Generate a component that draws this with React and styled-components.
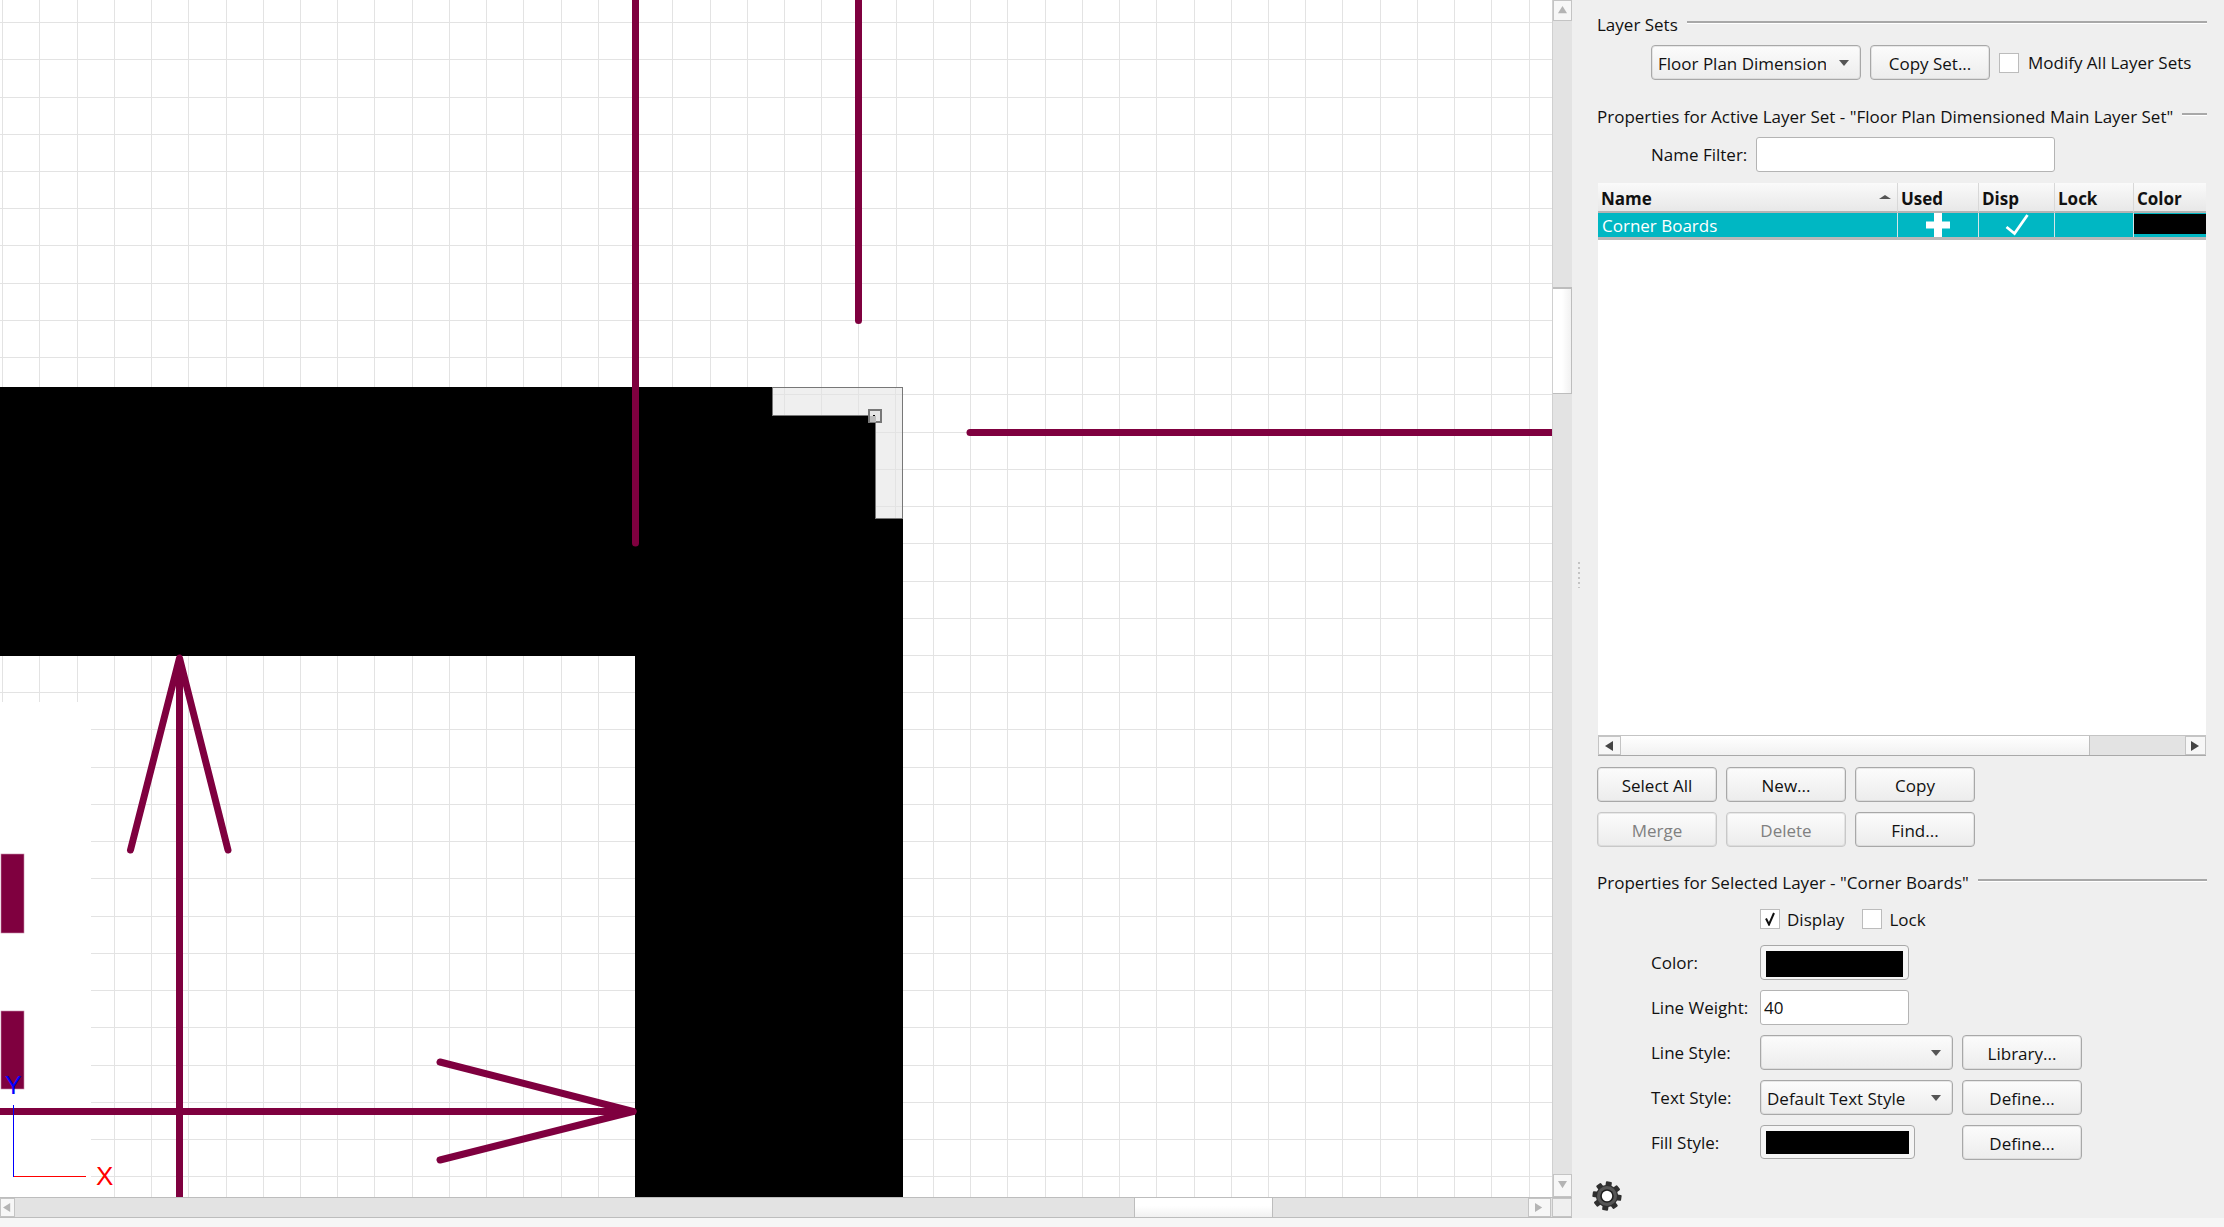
import React from "react";
import styled, { createGlobalStyle } from "styled-components";

const Global = createGlobalStyle`
  html, body { margin: 0; padding: 0; background: #f5f5f5; overflow: hidden; }
  body { font-family: "Open Sans", "Noto Sans", sans-serif; font-size: 17px; color: #111; }
`;

const MAROON = "#7f003f";
const PITCH = 37.23;
const CANVAS_W = 1552;
const CANVAS_H = 1197;

const Page = styled.div`
  width: 2224px;
  height: 1227px;
  display: flex;
  flex-direction: column;
  overflow: hidden;
`;
const Main = styled.div`
  height: 1218px;
  display: flex;
`;
const CanvasColumn = styled.div`
  width: 1572px;
  display: flex;
  flex-direction: column;
  flex: none;
`;
const CanvasRow = styled.div`
  height: 1197px;
  display: flex;
`;
const Drawing = styled.svg`
  display: block;
  width: ${CANVAS_W}px;
  height: ${CANVAS_H}px;
  background: #fff;
  flex: none;
`;
const BottomStrip = styled.div`
  height: 9px;
  background: #f6f6f6;
`;

const VScroll = styled.div`
  width: 20px;
  display: flex;
  flex-direction: column;
  background: #e3e3e3;
  border-left: 1px solid #d0d0d0;
  box-sizing: border-box;
`;
const HScroll = styled.div`
  height: 21px;
  display: flex;
  background: #e3e3e3;
  border-top: 1px solid #bdbdbd;
  border-bottom: 1px solid #bdbdbd;
  box-sizing: border-box;
`;
const ScrollEnd = styled.div`
  flex: none;
  width: ${(p) => p.$w || 19}px;
  height: ${(p) => p.$h || 19}px;
  display: flex;
  align-items: center;
  justify-content: center;
  background: #f7f7f7;
  border: 1px solid #c4c4c4;
  box-sizing: border-box;
`;
const VThumb = styled.div`
  margin-top: ${(p) => p.$top}px;
  height: 107px;
  flex: none;
  background: linear-gradient(90deg, #fff 50%, #f1f1f1);
  border-top: 2px solid #bdbdbd;
  border-right: 1px solid #bdbdbd;
  border-bottom: 1px solid #bdbdbd;
  box-sizing: border-box;
`;
const VSpacer = styled.div`
  flex: 1;
`;
const HThumb = styled.div`
  margin-left: ${(p) => p.$left}px;
  width: ${(p) => p.$w}px;
  flex: none;
  background: linear-gradient(#fff 40%, #f1f1f1);
  border-left: 1px solid #bdbdbd;
  border-right: 1px solid #bdbdbd;
  box-sizing: border-box;
`;
const Corner = styled.div`
  width: 20px;
  flex: none;
  background: #efefef;
  border: 1px solid #c4c4c4;
  box-sizing: border-box;
  margin-left: 1px;
`;

const Panel = styled.aside`
  flex: 1;
  position: relative;
  background: #efefef;
  padding: 16px 0 0 25px;
  box-sizing: border-box;
`;
const Grip = styled.div`
  position: absolute;
  left: 6px;
  top: 562px;
  width: 2px;
  height: 26px;
  background: repeating-linear-gradient(#c4c4c4 0 2px, transparent 2px 5px);
`;
const SectionHead = styled.div`
  width: 610px;
  height: 18px;
  margin-top: ${(p) => p.$mt || 0}px;
  display: flex;
  align-items: center;
  gap: 9px;
  line-height: 18px;
  white-space: nowrap;
`;
const SectionRule = styled.div`
  flex: 1;
  height: 2px;
  margin-top: -6px;
  background: #a8a8a8;
  box-shadow: 0 1px 0 #fff;
`;
const Row = styled.div`
  display: flex;
  align-items: center;
  gap: ${(p) => p.$gap ?? 9}px;
  height: ${(p) => p.$h || 35}px;
  margin-top: ${(p) => p.$mt || 11}px;
  padding-left: ${(p) => p.$pl || 54}px;
`;
const Btn = styled.div`
  flex: none;
  width: 120px;
  height: 35px;
  padding-top: 1px;
  display: flex;
  align-items: center;
  justify-content: center;
  box-sizing: border-box;
  border: 1px solid #a8a8a8;
  border-radius: 4px;
  box-shadow: inset 0 0 0 1px rgba(170, 170, 170, 0.25);
  background: linear-gradient(#fcfcfc, #ececec);
  color: ${(p) => (p.$off ? "#808080" : "#111")};
  ${(p) => p.$off && "border-color: #c8c8c8;"}
`;
const Combo = styled.div`
  flex: none;
  width: ${(p) => p.$w}px;
  height: 35px;
  position: relative;
  display: flex;
  align-items: center;
  padding: 1px 0 0 6px;
  box-sizing: border-box;
  border: 1px solid #a8a8a8;
  border-radius: 4px;
  box-shadow: inset 0 0 0 1px rgba(170, 170, 170, 0.25);
  background: linear-gradient(#fcfcfc, #ececec);
  white-space: nowrap;
  &::after {
    content: "";
    position: absolute;
    right: 11px;
    top: 14px;
    border-left: 5px solid transparent;
    border-right: 5px solid transparent;
    border-top: 6px solid #555;
  }
`;
const ComboText = styled.span`
  display: block;
  overflow: hidden;
  width: ${(p) => p.$w}px;
`;
const CheckBox = styled.div`
  flex: none;
  width: 20px;
  height: 20px;
  box-sizing: border-box;
  border: 1px solid #bcbcbc;
  background: #fff;
  display: flex;
  align-items: center;
  justify-content: center;
`;
const CheckLabel = styled.span`
  margin-right: ${(p) => p.$mr || 0}px;
  white-space: nowrap;
`;
const TextBox = styled.div`
  flex: none;
  width: ${(p) => p.$w}px;
  height: 35px;
  display: flex;
  align-items: center;
  padding-left: 3px;
  box-sizing: border-box;
  border: 1px solid #b4b4b4;
  border-radius: 3px;
  background: #fff;
`;

const Table = styled.div`
  width: 608px;
  height: 573px;
  margin: 11px 0 0 1px;
  display: flex;
  flex-direction: column;
  background: #fff;
  border-bottom: 1px solid #a9a9a9;
  box-sizing: border-box;
`;
const TableRow = styled.div`
  display: grid;
  grid-template-columns: 300px 81px 76px 79px 72px;
  flex: none;
`;
const HeadCell = styled.div`
  height: 30px;
  padding: 3px 0 0 3px;
  position: relative;
  box-sizing: border-box;
  font-weight: 700;
  line-height: 26px;
  background: linear-gradient(#fafafa, #e8e8e8);
  border-right: 1px solid #d8d8d8;
  border-bottom: 2px solid #b4b4b4;
  &:last-child { border-right: 0; }
`;
const SortArrow = styled.span`
  position: absolute;
  right: 6px;
  top: 12px;
  border-left: 6px solid transparent;
  border-right: 6px solid transparent;
  border-bottom: 4px solid #555;
`;
const BodyCell = styled.div`
  height: 24px;
  display: flex;
  align-items: center;
  justify-content: ${(p) => (p.$center ? "center" : "flex-start")};
  padding-left: ${(p) => (p.$center ? 0 : 4)}px;
  box-sizing: border-box;
  background: #00b7c3;
  color: #fff;
  border-right: 1px solid #d4e6e8;
  &:last-child { border-right: 0; }
`;
const ColorCell = styled(BodyCell)`
  padding: 1px 0 3px 0;
  &::before { content: ""; flex: 1; align-self: stretch; background: #000; }
`;
const RowEdge = styled.div`
  height: 3px;
  flex: none;
  background: #b8b8b8;
`;
const TableBody = styled.div`
  flex: 1;
`;
const TableScroll = styled.div`
  height: 20px;
  flex: none;
  display: flex;
  background: #e3e3e3;
  border-top: 1px solid #c4c4c4;
  box-sizing: border-box;
`;
const TableThumb = styled.div`
  width: 469px;
  flex: none;
  background: linear-gradient(#fff, #f1f1f1);
  border-right: 1px solid #bdbdbd;
  box-sizing: border-box;
`;
const ButtonGrid = styled.div`
  display: grid;
  grid-template-columns: repeat(3, 120px);
  grid-auto-rows: 35px;
  gap: 10px 9px;
  margin-top: 11px;
`;
const FormGrid = styled.div`
  display: grid;
  grid-template-columns: 109px 202px 120px;
  grid-auto-rows: 35px;
  row-gap: 10px;
  margin: 16px 0 0 54px;
  align-items: center;
`;
const FormLabel = styled.div`
  width: ${(p) => (p.$w ? `${p.$w}px` : "auto")};
  flex: none;
  white-space: nowrap;
`;
const SwatchBtn = styled.div`
  width: ${(p) => p.$w}px;
  height: ${(p) => p.$h || 35}px;
  align-self: start;
  padding: 5px 5px ${(p) => p.$pb}px;
  box-sizing: border-box;
  border: 1px solid #a8a8a8;
  border-radius: 4px;
  background: #f5f5f5;
  display: flex;
`;
const SwatchInk = styled.div`
  flex: 1;
  background: #000;
`;
const GearWrap = styled.div`
  position: absolute;
  left: 20px;
  top: 1181px;
  width: 30px;
  height: 30px;
`;

const xs = Array.from({ length: 42 }, (_, i) => Math.round(2.2 + PITCH * i));
const ys = Array.from({ length: 32 }, (_, i) => Math.round(22.1 + PITCH * i));

function Seg({ d, w = 7 }) {
  return <path d={d} stroke={MAROON} strokeWidth={w} strokeLinecap="round" strokeLinejoin="round" fill="none" />;
}

function CadDrawing() {
  return (
    <Drawing viewBox={`0 0 ${CANVAS_W} ${CANVAS_H}`}>
      <g shapeRendering="crispEdges" stroke="#e3e3e3" strokeWidth="1">
        {xs.map((x) => <line key={x} x1={x + 0.5} y1="0" x2={x + 0.5} y2={CANVAS_H} />)}
        {ys.map((y) => <line key={y} x1="0" y1={y + 0.5} x2={CANVAS_W} y2={y + 0.5} />)}
      </g>
      <rect x="0" y="702" width="91" height="495" fill="#fff" />
      <rect x="1" y="854" width="23" height="79" fill={MAROON} stroke="#c78aa8" strokeWidth="0.6" />
      <rect x="1" y="1011" width="23" height="78" fill={MAROON} stroke="#c78aa8" strokeWidth="0.6" />

      <path d="M0 387H903V1197H635V656H0Z" fill="#000" shapeRendering="crispEdges" />

      <path d="M772.5 387.5H902.5V518.5H875.5V415.5H772.5Z" fill="#efefef" stroke="#777" strokeWidth="1" shapeRendering="crispEdges" />
      <g shapeRendering="crispEdges" stroke="#e3e3e3" strokeWidth="1">
        <line x1="784.5" y1="388" x2="784.5" y2="415" />
        <line x1="821.5" y1="388" x2="821.5" y2="415" />
        <line x1="858.5" y1="388" x2="858.5" y2="415" />
        <line x1="895.5" y1="388" x2="895.5" y2="518" />
        <line x1="773" y1="394.5" x2="902" y2="394.5" />
        <line x1="876" y1="432.5" x2="902" y2="432.5" />
        <line x1="876" y1="469.5" x2="902" y2="469.5" />
        <line x1="876" y1="506.5" x2="902" y2="506.5" />
      </g>
      <rect x="869" y="410" width="12" height="12" fill="#e6e6e6" stroke="#777" strokeWidth="2" shapeRendering="crispEdges" />
      <rect x="870" y="416" width="6" height="6" fill="#bdbdbd" shapeRendering="crispEdges" />
      <rect x="873" y="415" width="2" height="1" fill="#000" shapeRendering="crispEdges" />

      <Seg d="M635.5 0V543" />
      <Seg d="M858.5 0V320.5" />
      <Seg d="M970 432.5H1552" />

      <Seg d="M179.5 1197V660" />
      <Seg d="M130.5 850L179.5 658L228 850" />
      <Seg d="M0 1111.5H633" />
      <Seg d="M440 1062L633 1111.5L440 1160" />

      <text x="5" y="1094" fill="#0000ff" fontSize="25" fontFamily="Liberation Sans, sans-serif">Y</text>
      <path d="M13.5 1105V1176.5" fill="none" stroke="#0000ff" shapeRendering="crispEdges" />
      <path d="M14 1176.5H86" fill="none" stroke="#ff0000" shapeRendering="crispEdges" />
      <text x="96" y="1185" fill="#ff0000" fontSize="26" fontFamily="Liberation Sans, sans-serif">X</text>
    </Drawing>
  );
}

const Tri = ({ dir, fill = "#b4b4b4", size = 9 }) => {
  const pts = {
    up: "0,8 5,0 10,8",
    down: "0,0 10,0 5,8",
    left: "8,0 8,10 0,5",
    right: "0,0 8,5 0,10",
  }[dir];
  return (
    <svg width={size} height={size} viewBox="0 0 10 10">
      <polygon points={pts} fill={fill} />
    </svg>
  );
};

const gearTeeth = Array.from({ length: 8 }, (_, i) => i * 45 + 8);

const Gear = () => (
  <svg width="30" height="30" viewBox="0 0 30 30">
    {gearTeeth.map((a) => (
      <rect key={a} x="12" y="0.5" width="6" height="7" rx="1" fill="#2f2f2f" transform={`rotate(${a} 15 15)`} />
    ))}
    <circle cx="15" cy="15" r="11" fill="#2f2f2f" />
    <circle cx="15" cy="15" r="10" fill="#565656" />
    <circle cx="15" cy="15" r="6.8" fill="#1f1f1f" />
    <circle cx="15" cy="15" r="5.2" fill="#fff" />
  </svg>
);

export default function App() {
  return (
    <Page>
      <Global />
      <Main>
        <CanvasColumn>
          <CanvasRow>
            <CadDrawing />
            <VScroll>
              <ScrollEnd $h={21}><Tri dir="up" /></ScrollEnd>
              <VThumb $top={266} />
              <VSpacer />
              <ScrollEnd $h={23}><Tri dir="down" /></ScrollEnd>
            </VScroll>
          </CanvasRow>
          <HScroll>
            <ScrollEnd $w={15}><Tri dir="left" /></ScrollEnd>
            <HThumb $left={1119} $w={139} />
            <VSpacer />
            <ScrollEnd $w={23}><Tri dir="right" /></ScrollEnd>
            <Corner />
          </HScroll>
        </CanvasColumn>

        <Panel>
          <Grip />
          <SectionHead>Layer Sets<SectionRule /></SectionHead>
          <Row>
            <Combo $w={210}><ComboText $w={168}>Floor Plan Dimensioned</ComboText></Combo>
            <Btn>Copy Set...</Btn>
            <CheckBox />
            <CheckLabel>Modify All Layer Sets</CheckLabel>
          </Row>
          <SectionHead $mt={28}>Properties for Active Layer Set - "Floor Plan Dimensioned Main Layer Set"<SectionRule /></SectionHead>
          <Row $gap={0}>
            <FormLabel $w={105}>Name Filter:</FormLabel>
            <TextBox $w={299} />
          </Row>
          <Table>
            <TableRow>
              <HeadCell>Name<SortArrow /></HeadCell>
              <HeadCell>Used</HeadCell>
              <HeadCell>Disp</HeadCell>
              <HeadCell>Lock</HeadCell>
              <HeadCell>Color</HeadCell>
            </TableRow>
            <TableRow>
              <BodyCell>Corner Boards</BodyCell>
              <BodyCell $center>
                <svg width="24" height="24" viewBox="0 0 24 24">
                  <path d="M8 0h8v8.500h8v7h-8v8.500H8v-8.500H0v-7h8z" fill="#fff" />
                </svg>
              </BodyCell>
              <BodyCell $center>
                <svg width="24" height="22" viewBox="0 0 24 22">
                  <path d="M1.500 13L9.500 19.500L22.500 1" fill="none" stroke="#fff" strokeWidth="2.800" />
                </svg>
              </BodyCell>
              <BodyCell />
              <ColorCell />
            </TableRow>
            <RowEdge />
            <TableBody />
            <TableScroll>
              <ScrollEnd $w={23} $h={19}><Tri dir="left" fill="#444" size={10} /></ScrollEnd>
              <TableThumb />
              <VSpacer />
              <ScrollEnd $w={21} $h={19}><Tri dir="right" fill="#444" size={10} /></ScrollEnd>
            </TableScroll>
          </Table>
          <ButtonGrid>
            <Btn>Select All</Btn>
            <Btn>New...</Btn>
            <Btn>Copy</Btn>
            <Btn $off>Merge</Btn>
            <Btn $off>Delete</Btn>
            <Btn>Find...</Btn>
          </ButtonGrid>
          <SectionHead $mt={27}>Properties for Selected Layer - "Corner Boards"<SectionRule /></SectionHead>
          <Row $h={20} $mt={17} $pl={163} $gap={7}>
            <CheckBox>
              <svg width="14" height="14" viewBox="0 0 14 14">
                <path d="M3 6.500L6 12.500L11 1" fill="none" stroke="#111" strokeWidth="2" />
              </svg>
            </CheckBox>
            <CheckLabel $mr={11}>Display</CheckLabel>
            <CheckBox />
            <CheckLabel>Lock</CheckLabel>
          </Row>
          <FormGrid>
            <FormLabel>Color:</FormLabel>
            <SwatchBtn $w={149} $pb={2}><SwatchInk /></SwatchBtn>
            <span />
            <FormLabel>Line Weight:</FormLabel>
            <TextBox $w={149}>40</TextBox>
            <span />
            <FormLabel>Line Style:</FormLabel>
            <Combo $w={193} />
            <Btn>Library...</Btn>
            <FormLabel>Text Style:</FormLabel>
            <Combo $w={193}>Default Text Style</Combo>
            <Btn>Define...</Btn>
            <FormLabel>Fill Style:</FormLabel>
            <SwatchBtn $w={155} $h={34} $pb={4}><SwatchInk /></SwatchBtn>
            <Btn>Define...</Btn>
          </FormGrid>
          <GearWrap><Gear /></GearWrap>
        </Panel>
      </Main>
      <BottomStrip />
    </Page>
  );
}
